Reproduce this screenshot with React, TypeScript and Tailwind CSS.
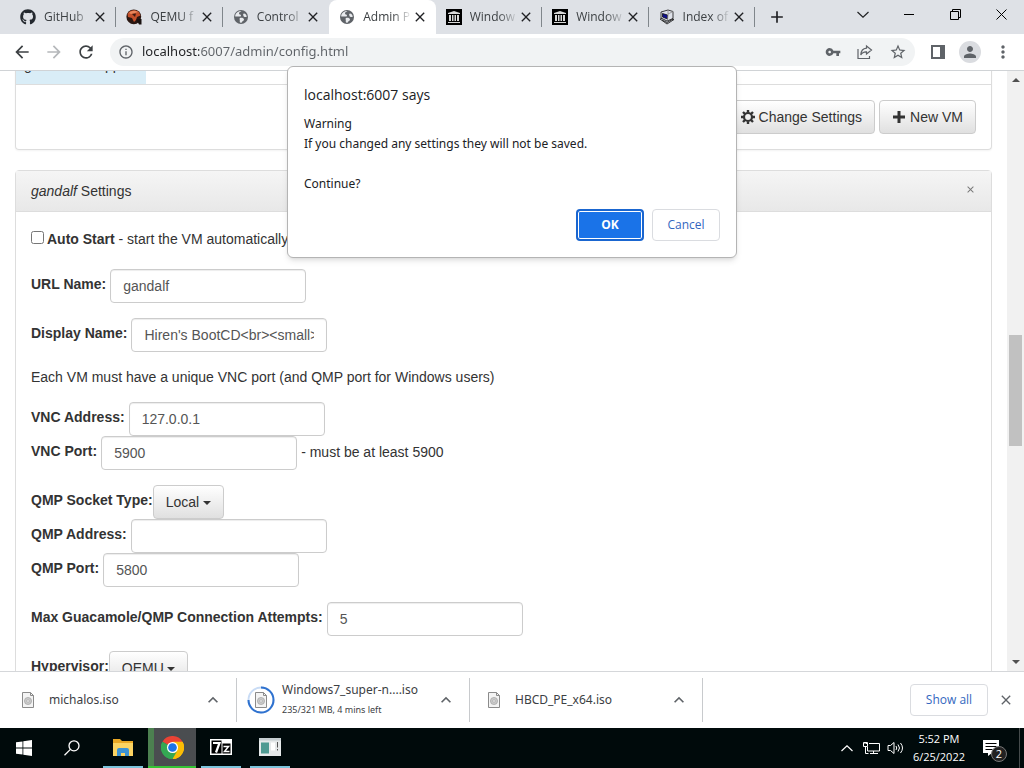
import type { ReactNode } from 'react'
import { FaGithub } from 'react-icons/fa'
import {
  MdAdd,
  MdArrowBack,
  MdArrowForward,
  MdClose,
  MdInfoOutline,
  MdKeyboardArrowUp,
  MdMoreVert,
  MdPerson,
  MdRefresh,
  MdStarBorder,
  MdVpnKey,
} from 'react-icons/md'

const QemuIcon = () => (
  <svg viewBox="0 0 16 16" className="size-4">
    <circle cx="7.8" cy="7.8" r="7.4" fill="#2a1712" />
    <path d="M10 10h5.500v5.500H13z" fill="#1a1210" />
    <path d="M1.500 5C3 1 9 0 13 3l1.500 3.500-3.500 1.500-1 3-2 2-2-4-4-1z" fill="#c4502b" />
    <path d="M3 4c2-2.500 6-3 9-1L9 4 5 5z" fill="#e8875c" />
    <path d="M6 5l4-.5L9 8z" fill="#3a1a12" />
  </svg>
)

const GlobeIcon = () => (
  <svg viewBox="0 0 16 16" className="size-4">
    <circle cx="8" cy="8" r="7" fill="#5f6368" />
    <path d="M8.500 2c-1 1-2.500 1-2.500 2.500S8 5 8 6.500 6 7.500 5 7.500H2.200C2 4.500 4.500 2 8.500 2z" fill="#e8eaed" />
    <path d="M11 4.500c1.500 0 2.500 1.500 2.800 3-1 .8-2.800.8-3.300-.5S10 4.500 11 4.500z" fill="#e8eaed" />
    <path d="M7 9c1.500-.5 4 0 4 1.500s-2 1.500-2.500 3.300C7 13.800 6.500 13 6.800 12S6 9.500 7 9z" fill="#e8eaed" />
  </svg>
)

const ArchiveIcon = () => (
  <svg viewBox="0 0 16 16" className="size-4">
    <path d="M0 0h16v16H0z" fill="#000" />
    <path
      d="M2 4l6-2 6 2v1H2zM3 6h2v6H3zM6 6h1.500v6H6zM8.500 6H10v6H8.500zM11 6h2v6h-2zM2 13h12v1H2z"
      fill="#d9d9d9"
    />
  </svg>
)

const ComputerIcon = () => (
  <svg viewBox="0 0 16 16" className="size-4" stroke="#111" strokeWidth="0.800">
    <path d="M1 10l7-2.500 7 3-7 4.500z" fill="#c9ccd4" />
    <path d="M2 3l7-2 5 1.500v7L8 12l-6-3z" fill="#dfe2ea" />
    <path d="M3.500 4.500L8.500 6v4l-5-2z" fill="#10108c" />
    <path d="M9 1v4.500L8.500 11M9 5l5-2.500" fill="none" stroke="#888" />
    <path d="M3 11l5 2.500 6-3.500" fill="none" />
  </svg>
)

const ShareIcon = () => (
  <svg viewBox="0 0 16 16" className="size-4" fill="none" stroke="#5f6368" strokeWidth="1.200">
    <path d="M1 5v9.500h11.500V12" />
    <path d="M9.500 2l5 4-5 4V7.800C6.500 7.600 4.800 9 3.800 11 4 7.200 6 4.500 9.500 4.200z" />
  </svg>
)

const CogIcon = () => (
  <svg viewBox="0 0 14 14" className="size-3.5" fill="none" stroke="currentColor">
    <circle cx="7" cy="7" r="4" strokeWidth="2.200" />
    <path
      d="M7 0v2.500M7 11.500V14M0 7h2.500M11.500 7H14M2 2l2 2M10 10l2 2M12 2l-2 2M4 10l-2 2"
      strokeWidth="2.400"
    />
  </svg>
)

const PlusIcon = () => (
  <svg viewBox="0 0 14 14" className="size-3.5">
    <path d="M5.500 1h3v4.500H13v3H8.500V13h-3V8.500H1v-3h4.500z" fill="currentColor" />
  </svg>
)

const ChevronIcon = ({ className = '' }: { className?: string }) => (
  <svg viewBox="0 0 12 7" className={`h-[7px] w-3 ${className}`} fill="none" stroke="currentColor">
    <path d="M.5 6L6 .8 11.500 6" strokeWidth="1.200" />
  </svg>
)

const CaretIcon = ({ className = '' }: { className?: string }) => (
  <svg viewBox="0 0 8 4" className={`h-1 w-2 ${className}`}>
    <path d="M0 0h8L4 4z" fill="currentColor" />
  </svg>
)

const IsoFileIcon = () => (
  <svg viewBox="0 0 12 16" className="h-4 w-3">
    <path d="M.5.5h8l3 3v12H.5z" fill="#f4f4f4" stroke="#8b8b8b" />
    <path d="M8.500.5v3h3" fill="none" stroke="#8b8b8b" />
    <circle cx="6" cy="9" r="3.600" fill="#c9c9c9" stroke="#9a9a9a" strokeWidth="0.600" />
    <circle cx="6" cy="9" r="1.200" fill="#fff" stroke="#8b8b8b" strokeWidth="0.500" />
  </svg>
)

const WindowsIcon = () => (
  <svg viewBox="0 0 16 16" className="size-4">
    <path
      d="M0 2.300L6.500 1.400V7.600H0zM7.300 1.300L16 0v7.600H7.300zM0 8.400h6.500v6.200L0 13.700zM7.300 8.400H16V16l-8.700-1.300z"
      fill="#fff"
    />
  </svg>
)

const SearchIcon = () => (
  <svg viewBox="0 0 16 16" className="size-4" fill="none" stroke="#fff" strokeWidth="1.300">
    <circle cx="10" cy="5.800" r="5" />
    <path d="M6.400 9.400L.5 15.300" />
  </svg>
)

const ExplorerIcon = () => (
  <svg viewBox="0 0 22 19" className="h-[19px] w-[22px]">
    <path d="M1 1h7l2 2h11v15H1z" fill="#e9a825" />
    <path d="M1 5h20v13H1z" fill="#fcd462" />
    <path d="M5 18v-6q0-2 2-2h8q2 0 2 2v6h-4v-3H9v3z" fill="#3d93d4" />
  </svg>
)

const ChromeIcon = () => (
  <svg viewBox="0 0 24 24" className="size-[23px]">
    <path d="M12 12L1.600 6A12 12 0 0 1 22.400 6z" fill="#ea4335" />
    <path d="M12 12l10.400-6A12 12 0 0 1 12 24z" fill="#fbbc05" />
    <path d="M12 12v12A12 12 0 0 1 1.600 6z" fill="#34a853" />
    <path d="M12 6h10.400A12 12 0 0 1 12 24l5.200-9z" fill="#fbbc05" />
    <path d="M1.600 6l5.200 9A6 6 0 0 0 17.200 15L12 24A12 12 0 0 1 1.600 6z" fill="#34a853" />
    <circle cx="12" cy="12" r="5.800" fill="#fff" />
    <circle cx="12" cy="12" r="4.500" fill="#1a73e8" />
  </svg>
)

const SevenZipIcon = () => (
  <svg viewBox="0 0 22 16" className="h-4 w-[22px]">
    <path d="M0 0h22v16H0z" fill="#fff" />
    <path d="M1.500 1.500h10v13h-10zM12.500 4.500h8v10h-8z" fill="#000" />
    <path d="M3 4h6.500L6 13.500" fill="none" stroke="#fff" strokeWidth="2.200" />
    <path d="M13.500 7.500h5L14.500 12.500h5" fill="none" stroke="#fff" strokeWidth="1.500" />
  </svg>
)

const AppWindowIcon = () => (
  <svg viewBox="0 0 22 18" className="h-[18px] w-[22px]">
    <path d="M0 0h22v18H0z" fill="#e6e9ea" />
    <path d="M0 0h22v2.500H0z" fill="#c5cdd0" />
    <path d="M2 4.500h8v11H2z" fill="#4f9a92" />
    <path d="M12 4.500h4v8h-4z" fill="#fff" />
    <path d="M18.500 4v5.500M18.500 11v1.500" stroke="#555" />
  </svg>
)

const NetworkIcon = () => (
  <svg viewBox="0 0 18 14" className="h-3.5 w-[18px]" fill="none" stroke="#fff">
    <path d="M6 2.500h10.500v7.500H4.500V6M7 12.500h8M10.500 10v2.500M2.500 6v6.500h3" />
    <path d="M.5 1.500h4v4h-4z" />
    <path d="M2 1v2M3.500 1v2" />
  </svg>
)

const SpeakerIcon = () => (
  <svg viewBox="0 0 18 14" className="h-3.5 w-[18px]" fill="none" stroke="#fff">
    <path d="M1 4.500h2.500L7 1.500v11L3.500 9.500H1z" />
    <path d="M9 5q1.500 2 0 4M11 3.500q3 3.500 0 7M13.500 2q4 5 0 10" />
  </svg>
)

const MessageIcon = () => (
  <svg viewBox="0 0 16 16" className="size-4">
    <path d="M0 0h16v13H9l-4 3v-3H0z" fill="#fff" />
    <path d="M2.500 3.500h11M2.500 6.500h11M2.500 9.500h7" stroke="#000" />
  </svg>
)

type Tab = { id: number; title: string; icon: ReactNode; active?: boolean; line?: boolean }

const tabs: Tab[] = [
  { id: 1, title: 'GitHub', icon: <FaGithub size={16} color="#24292f" />, line: true },
  { id: 2, title: 'QEMU f', icon: <QemuIcon />, line: true },
  { id: 3, title: 'Control', icon: <GlobeIcon /> },
  { id: 4, title: 'Admin P', icon: <GlobeIcon />, active: true },
  { id: 5, title: 'Window', icon: <ArchiveIcon />, line: true },
  { id: 6, title: 'Window', icon: <ArchiveIcon />, line: true },
  { id: 7, title: 'Index of', icon: <ComputerIcon />, line: true },
]

const TabStrip = () => {
  return (
    <header className="flex h-[34px] shrink-0 justify-between bg-[#dee1e6] pl-[10px] text-[#202124]">
      <div className="flex min-w-0 flex-1 items-center">
        <div className="grid h-full max-w-[745px] min-w-0 flex-1 grid-cols-7">
          {tabs.map((tab) => (
            <div
              key={tab.id}
              className={
                tab.active
                  ? 'flex min-w-0 items-center rounded-t-lg bg-white pl-[10px]'
                  : 'flex min-w-0 items-center pl-[10px]'
              }
            >
              <span className="shrink-0">{tab.icon}</span>
              <span className="ml-2 min-w-0 flex-1 overflow-hidden mask-r-from-60% text-xs whitespace-nowrap text-[#3c4043]">
                {tab.title}
              </span>
              <button aria-label="Close tab" className="shrink-0">
                <MdClose size={16} />
              </button>
              <span
                className={
                  tab.line ? 'ml-[7px] h-5 w-px shrink-0 bg-[#80868b]' : 'ml-[7px] h-5 w-px shrink-0'
                }
              />
            </div>
          ))}
        </div>
        <button aria-label="New tab" className="ml-3">
          <MdAdd size={20} />
        </button>
      </div>
      <div className="flex items-start">
        <button aria-label="Search tabs" className="flex h-7 w-[46px] items-center justify-center">
          <ChevronIcon className="rotate-180" />
        </button>
        <button aria-label="Minimize" className="flex h-7 w-[46px] items-center justify-center">
          <span className="h-px w-2.5 bg-black" />
        </button>
        <button aria-label="Restore" className="flex h-7 w-[46px] items-center justify-center">
          <svg viewBox="0 0 11 11" className="size-[11px]" fill="none" stroke="#000">
            <path d="M.5 2.500h8v8h-8zM2.500 2.500v-2h8v8h-2" />
          </svg>
        </button>
        <button aria-label="Close" className="flex h-7 w-[46px] items-center justify-center">
          <svg viewBox="0 0 11 11" className="size-[11px]" stroke="#000">
            <path d="M.5.5l10 10M10.500.5l-10 10" />
          </svg>
        </button>
      </div>
    </header>
  )
}

const Toolbar = () => {
  return (
    <nav className="flex h-[37px] shrink-0 items-center border-b border-[#d0d3d6] bg-white pl-1.5 pr-[11px] text-[#5f6368]">
      <button aria-label="Back" className="flex w-8 justify-center text-[#3c4043]">
        <MdArrowBack size={20} />
      </button>
      <button aria-label="Forward" className="flex w-8 justify-center text-[#b5b8bb]">
        <MdArrowForward size={20} />
      </button>
      <button aria-label="Reload" className="flex w-8 justify-center text-[#3c4043]">
        <MdRefresh size={20} />
      </button>
      <div className="ml-2 flex h-7 flex-1 items-center rounded-full bg-[#f1f3f4] px-2">
        <MdInfoOutline size={16} />
        {/* host part is darker than the path */}
        <input
          aria-label="Address"
          defaultValue="localhost:6007/admin/config.html"
          className="ml-2 min-w-0 flex-1 bg-linear-to-r from-[#202124] from-[57px] to-[#5f6368] to-[57px] bg-clip-text font-['Noto_Sans',sans-serif] text-[13px] text-transparent outline-none"
        />
        <div className="flex items-center gap-4">
          <MdVpnKey size={16} />
          <ShareIcon />
          <MdStarBorder size={18} />
        </div>
      </div>
      <div className="ml-4 flex items-center">
        <svg viewBox="0 0 14 14" className="size-3.5">
          <path d="M1 1h12v12H1z" fill="none" stroke="#5f6368" strokeWidth="2" />
          <path d="M9 1h4v12H9z" fill="#5f6368" />
        </svg>
        <span className="ml-3.5 flex size-[22px] items-center justify-center rounded-full bg-[#dadce0]">
          <MdPerson size={18} />
        </span>
        <button aria-label="Menu" className="ml-3">
          <MdMoreVert size={20} />
        </button>
      </div>
    </nav>
  )
}

type FieldProps = { id: string; label: string; value: string; children?: ReactNode }

const Field = ({ id, label, value, children }: FieldProps) => {
  return (
    <div className="flex items-center gap-1">
      <label htmlFor={id} className="pb-1 font-bold">
        {label}
      </label>
      <input
        id={id}
        defaultValue={value}
        className="h-[34px] w-[196px] rounded border border-[#ccc] bg-white px-3 text-[#555] shadow-[inset_0_1px_1px_rgba(0,0,0,0.075)]"
      />
      {children}
    </div>
  )
}

const Dropdown = ({ id, label, value }: { id: string; label: string; value: string }) => {
  return (
    <div className="flex items-center">
      <label htmlFor={id} className="pb-1 font-bold">
        {label}
      </label>
      <div className="relative">
        <select
          id={id}
          className="h-[34px] appearance-none rounded border border-[#ccc] bg-linear-to-b from-white to-[#e0e0e0] pr-[23px] pl-3"
        >
          <option>{value}</option>
        </select>
        <CaretIcon className="pointer-events-none absolute top-4 right-[13px]" />
      </div>
    </div>
  )
}

const pageButton =
  'flex h-[34px] items-center gap-1 rounded border border-[#ccc] bg-linear-to-b from-white to-[#e0e0e0] px-3'

const AdminPage = () => {
  return (
    <main className="min-w-0 flex-1 overflow-hidden bg-white px-[15px] font-['Liberation_Sans',Arial,sans-serif] text-sm text-[#333]">
      <section className="-mt-[23px] rounded-b border border-t-0 border-[#ddd] shadow-xs">
        <div className="flex border-b border-[#ddd]">
          <span className="w-[130px] bg-[#d9edf7] px-2 pt-[7px] pb-[9px]">guacamole-app</span>
        </div>
        <div className="flex justify-end gap-1 p-[15px]">
          <button className={pageButton}>
            <CogIcon />
            Change Settings
          </button>
          <button className={pageButton}>
            <PlusIcon />
            New VM
          </button>
        </div>
      </section>

      <section className="mt-5 rounded-t border border-[#ddd]">
        <div className="flex items-center justify-between border-b border-[#ddd] bg-linear-to-b from-[#f5f5f5] to-[#e8e8e8] px-[15px] py-2.5">
          <h2>
            <em>gandalf</em> Settings
          </h2>
          <button aria-label="Close settings" className="pb-1 text-[#777]">
            <MdClose size={11} />
          </button>
        </div>
        <form className="flex flex-col gap-[15px] p-[15px]">
          <div className="flex items-center pt-0.5 pb-[5px]">
            <input id="autostart" type="checkbox" className="mr-[3px] mb-1 size-[13px]" />
            <label htmlFor="autostart">
              <strong>Auto Start</strong> - start the VM automatically
            </label>
          </div>
          <Field id="url" label="URL Name:" value="gandalf" />
          <Field id="display" label="Display Name:" value="Hiren's BootCD<br><small>PE x64</small>" />
          <p>Each VM must have a unique VNC port (and QMP port for Windows users)</p>
          <div>
            <Field id="vnc-address" label="VNC Address:" value="127.0.0.1" />
            <Field id="vnc-port" label="VNC Port:" value="5900">
              <span className="pb-0.5">- must be at least 5900</span>
            </Field>
          </div>
          <div>
            <Dropdown id="qmp-type" label="QMP Socket Type:" value="Local" />
            <Field id="qmp-address" label="QMP Address:" value="" />
            <Field id="qmp-port" label="QMP Port:" value="5800" />
          </div>
          <Field id="attempts" label="Max Guacamole/QMP Connection Attempts:" value="5" />
          <Dropdown id="hypervisor" label="Hypervisor:" value="QEMU" />
        </form>
      </section>
    </main>
  )
}

const ScrollBar = () => {
  return (
    <div className="flex w-[17px] shrink-0 flex-col items-center justify-between bg-[#f1f1f1] py-[7px] text-[#505050]">
      <CaretIcon className="rotate-180" />
      <div className="flex w-[13px] flex-1 flex-col">
        <div className="flex-[253]" />
        <div className="flex-[111] bg-[#c1c1c1]" />
        <div className="flex-[214]" />
      </div>
      <CaretIcon />
    </div>
  )
}

const AlertDialog = () => {
  return (
    <div
      role="dialog"
      aria-labelledby="alert-title"
      className="absolute inset-x-0 top-[66px] mx-auto w-[450px] rounded-md border border-[#b4b4b4] bg-white p-4 text-xs text-[#202124] shadow-md"
    >
      <h1 id="alert-title" className="mt-0.5 text-sm">
        localhost:6007 says
      </h1>
      <p className="mt-[9px] font-['Noto_Sans',sans-serif] leading-5">
        Warning
        <br />
        If you changed any settings they will not be saved.
        <br />
        <br />
        Continue?
      </p>
      <div className="mt-[15px] flex justify-end gap-2">
        <button className="h-8 w-[68px] rounded border-2 border-[#1a66d0] bg-[#1a73e8] font-bold text-white shadow-[inset_0_0_0_1px_#fff]">
          OK
        </button>
        <button className="h-8 w-[68px] rounded border border-[#dadce0] font-medium text-[#3367c0]">
          Cancel
        </button>
      </div>
    </div>
  )
}

type DownloadProps = { name: string; status?: string }

const Download = ({ name, status }: DownloadProps) => {
  return (
    <div className="flex h-11 w-[233px] items-center border-r border-[#c8cacd] pr-[13px] pl-[18px]">
      <span className="relative shrink-0">
        <IsoFileIcon />
        {status && (
          <svg
            viewBox="0 0 28 28"
            className="absolute -top-1.5 -left-2 size-7"
            fill="none"
            strokeWidth="2"
          >
            <circle cx="14" cy="14" r="12.500" stroke="#c9dcf5" />
            <path d="M14 1.500A12.500 12.500 0 1 1 1.500 14" stroke="#2f72cf" />
          </svg>
        )}
      </span>
      <div className="ml-[15px] min-w-0 flex-1 font-['Noto_Sans',sans-serif] leading-5 whitespace-nowrap text-[#3c4043]">
        <p className="text-xs leading-5">{name}</p>
        {status && <p className="text-[9px] leading-5">{status}</p>}
      </div>
      <button aria-label={`Options for ${name}`} className="text-[#5f6368]">
        <MdKeyboardArrowUp size={20} />
      </button>
    </div>
  )
}

const DownloadBar = () => {
  return (
    <section className="flex h-[57px] shrink-0 items-center border-t border-[#d5d7da] bg-white pl-1">
      <Download name="michalos.iso" />
      <Download name="Windows7_super-n....iso" status="235/321 MB, 4 mins left" />
      <Download name="HBCD_PE_x64.iso" />
      <button className="ml-auto h-8 w-[78px] rounded border border-[#dadce0] text-xs font-medium text-[#3367c0]">
        Show all
      </button>
      <button aria-label="Close downloads" className="mx-2.5 text-[#5f6368]">
        <MdClose size={16} />
      </button>
    </section>
  )
}

const TaskBar = () => {
  return (
    <footer className="flex h-10 shrink-0 items-stretch bg-[#000a0b] text-white">
      <button aria-label="Start" className="flex w-12 items-center justify-center">
        <WindowsIcon />
      </button>
      <button aria-label="Search" className="flex w-12 items-center justify-center">
        <SearchIcon />
      </button>
      <button
        aria-label="File Explorer"
        className="ml-[7px] flex w-10 items-center justify-center border-b-2 border-[#7cc4dc]"
      >
        <ExplorerIcon />
      </button>
      <button
        aria-label="Google Chrome"
        className="ml-[5px] flex w-12 items-center justify-center border-b-2 border-[#35c435] bg-linear-to-r from-[#4c8050] from-12% to-[#4a4d50] to-12%"
      >
        <ChromeIcon />
      </button>
      <button
        aria-label="7-Zip"
        className="ml-[5px] flex w-10 items-center justify-center border-b-2 border-[#7cc4dc]"
      >
        <SevenZipIcon />
      </button>
      <button
        aria-label="VM Manager"
        className="ml-[9px] flex w-10 items-center justify-center border-b-2 border-[#7cc4dc]"
      >
        <AppWindowIcon />
      </button>
      <div className="ml-auto flex items-center">
        <ChevronIcon />
        <span className="ml-2.5 flex gap-1.5">
          <NetworkIcon />
          <SpeakerIcon />
        </span>
        <p className="ml-2 text-center text-[11px] leading-[18px]">
          5:52 PM
          <br />
          6/25/2022
        </p>
        <button aria-label="Notifications" className="relative mr-5 ml-[18px]">
          <MessageIcon />
          <span className="absolute top-1.5 left-2 flex size-4 items-center justify-center rounded-full border border-[#777] bg-[#222] text-[11px]">
            2
          </span>
        </button>
        <span className="mr-1 h-full w-px bg-[#454b4c]" />
      </div>
    </footer>
  )
}

export default function App() {
  return (
    <div className="relative flex h-screen flex-col overflow-hidden bg-white font-['Open_Sans',sans-serif]">
      <TabStrip />
      <Toolbar />
      <div className="flex min-h-0 flex-1">
        <AdminPage />
        <ScrollBar />
      </div>
      <DownloadBar />
      <TaskBar />
      <AlertDialog />
    </div>
  )
}
